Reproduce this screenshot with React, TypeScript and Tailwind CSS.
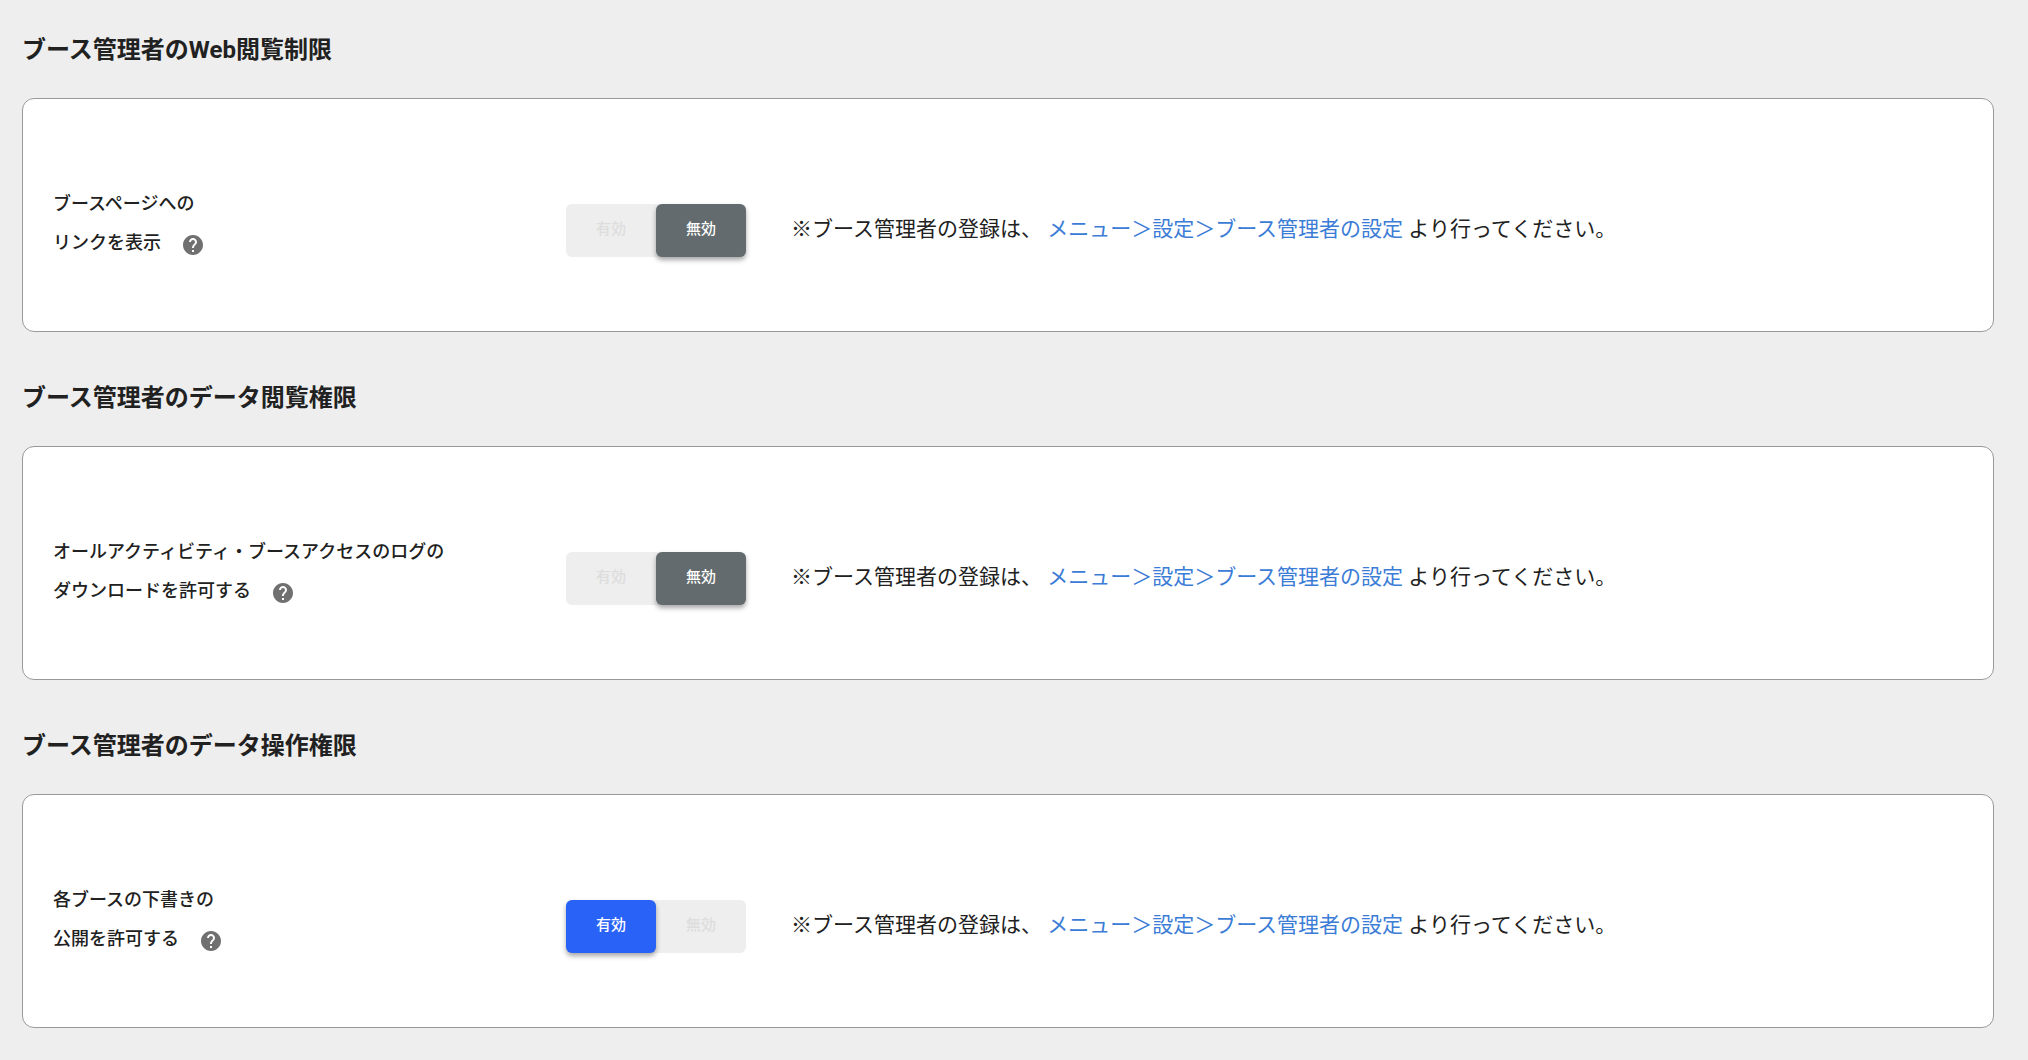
import { useState } from "react";
import clsx from "clsx";
import { MdHelp } from "react-icons/md";

interface Permission {
  id: string;
  heading: string;
  label: string[];
  enabled: boolean;
}

const permissions: Permission[] = [
  {
    id: "web",
    heading: "ブース管理者のWeb閲覧制限",
    label: ["ブースページへの", "リンクを表示"],
    enabled: false,
  },
  {
    id: "view",
    heading: "ブース管理者のデータ閲覧権限",
    label: ["オールアクティビティ・ブースアクセスのログの", "ダウンロードを許可する"],
    enabled: false,
  },
  {
    id: "edit",
    heading: "ブース管理者のデータ操作権限",
    label: ["各ブースの下書きの", "公開を許可する"],
    enabled: true,
  },
];

const toggleShadow = "z-10 text-white shadow-[0_3px_5px_rgba(0,0,0,0.35)]";

function Toggle({ labelId, initial }: { labelId: string; initial: boolean }) {
  const [enabled, setEnabled] = useState(initial);

  return (
    <div role="group" aria-labelledby={labelId} className="flex shrink-0 rounded-md bg-[#eeeeee]">
      <button
        type="button"
        aria-pressed={enabled}
        onClick={() => setEnabled(true)}
        className={clsx(
          "relative h-[53px] w-[90px] cursor-pointer rounded-md pb-0.5 text-[15px] font-medium",
          enabled ? ["bg-[#2962f6]", toggleShadow] : "text-[#dddddd]",
        )}
      >
        有効
      </button>
      <button
        type="button"
        aria-pressed={!enabled}
        onClick={() => setEnabled(false)}
        className={clsx(
          "relative h-[53px] w-[90px] cursor-pointer rounded-md pb-0.5 text-[15px] font-medium",
          !enabled ? ["bg-[#636b6e]", toggleShadow] : "text-[#dddddd]",
        )}
      >
        無効
      </button>
    </div>
  );
}

function PermissionSection({ permission }: { permission: Permission }) {
  const labelId = `${permission.id}-label`;

  return (
    <section>
      <h2 className="pt-[34px] pb-8 text-2xl font-bold">{permission.heading}</h2>

      <div className="flex min-h-[234px] items-center rounded-xl border border-[#999999] bg-white px-[30px] pt-[30px]">
        <div className="w-[513px] shrink-0 pb-3.5 text-lg/[39px] font-medium">
          <div id={labelId}>{permission.label[0]}</div>
          <div className="flex items-center gap-5">
            <span>{permission.label[1]}</span>
            <button type="button" aria-label="ヘルプ" className="cursor-pointer pt-1 text-[#707070]">
              <MdHelp className="size-6" />
            </button>
          </div>
        </div>

        <Toggle labelId={labelId} initial={permission.enabled} />

        <p className="pl-[45px] text-[21px] font-normal">
          ※ブース管理者の登録は、{" "}
          <a href="#booth-admin" className="text-[#3b7cd6] hover:underline">
            メニュー＞設定＞ブース管理者の設定
          </a>{" "}
          より行ってください。
        </p>
      </div>
    </section>
  );
}

export default function App() {
  return (
    <main
      lang="ja"
      className="flex min-h-screen flex-col gap-4 bg-[#eeeeee] pr-[34px] pb-8 pl-[22px] font-[Roboto,'Noto_Sans_CJK_JP',sans-serif] text-[#212121]"
    >
      {permissions.map((permission) => (
        <PermissionSection key={permission.id} permission={permission} />
      ))}
    </main>
  );
}
